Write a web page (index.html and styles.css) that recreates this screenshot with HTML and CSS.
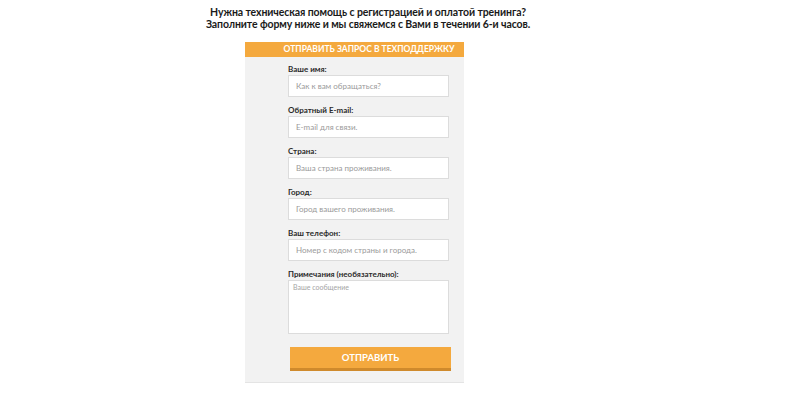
FILE: index.html
```html
<!DOCTYPE html>
<html>
<head>
	<title>Техподдержка</title>
	<meta name="viewport" content="width=device-width">
	<link rel="stylesheet" href="styles.css">
</head>
<body>
	<div class="page">
		<h1 class="intro">
			<span class="introLine">Нужна техническая помощь с регистрацией и оплатой тренинга?</span>
			<span class="introLine">Заполните форму ниже и мы свяжемся с Вами в течении 6-и часов.</span>
		</h1>

		<div class="supportBlock">
			<div class="supportHeader">Отправить запрос в техподдержку</div>
			<form class="supportForm">
				<label class="fieldLabel">Ваше имя:</label>
				<input class="fieldInput" type="text" placeholder="Как к вам обращаться?">

				<label class="fieldLabel">Обратный E-mail:</label>
				<input class="fieldInput" type="text" placeholder="E-mail для связи.">

				<label class="fieldLabel">Страна:</label>
				<input class="fieldInput" type="text" placeholder="Ваша страна проживания.">

				<label class="fieldLabel">Город:</label>
				<input class="fieldInput" type="text" placeholder="Город вашего проживания.">

				<label class="fieldLabel">Ваш телефон:</label>
				<input class="fieldInput" type="text" placeholder="Номер с кодом страны и города.">

				<label class="fieldLabel">Примечания (необязательно):</label>
				<textarea class="fieldText" placeholder="Ваше сообщение"></textarea>

				<button class="sendButton" type="button">Отправить</button>
			</form>
		</div>
	</div>
</body>
</html>
```

FILE: styles.css
```css
/* основные стили */
body {
	background-color: #fff;
	color: #222;
	font-family: Lato, "Noto Sans", Arial, sans-serif;
	margin: 0;
	padding: 0;
}

.page {
	width: 440px;
	margin: 0 0 0 148px;
	padding-top: 6px;
}

.intro {
	display: flex;
	flex-direction: column;
	align-items: center;
	font-size: 10.5px;
	line-height: 12px;
	font-weight: bold;
	letter-spacing: -0.1px;
	color: #1a1a1a;
	margin: 0 0 12px 0;
}

.introLine {
	white-space: nowrap;
}

/* блок формы */
.supportBlock {
	width: 219px;
	margin-left: 97px;
	background-color: #f2f2f2;
	border-bottom: 1px solid #e4e4e4;
}

.supportHeader {
	background-color: #f4a93e;
	color: #fff;
	font-size: 8.5px;
	font-weight: bold;
	text-transform: uppercase;
	height: 15px;
	line-height: 15px;
	text-align: center;
	padding-left: 29px;
	white-space: nowrap;
	overflow: hidden;
}

.supportForm {
	display: flex;
	flex-direction: column;
	align-items: flex-start;
	padding: 6px 15px 11px 43px;
}

.fieldLabel {
	font-size: 8px;
	font-weight: bold;
	line-height: 12px;
	color: #2b2b2b;
}

.fieldInput,
.fieldText {
	box-sizing: border-box;
	width: 161px;
	height: 22px;
	margin: 0 0 7px 0;
	padding: 0 7px;
	border: 1px solid #dcdcdc;
	background-color: #fff;
	font-family: Lato, "Noto Sans", Arial, sans-serif;
	font-size: 8px;
	color: #555;
	outline: none;
}

.fieldInput::placeholder {
	color: #9a9a9a;
}

.fieldText {
	height: 54px;
	margin-bottom: 13px;
	padding: 2px 4px;
	font-size: 7px;
	resize: none;
}

.fieldText::placeholder {
	color: #a5a5a5;
}

.sendButton {
	width: 161px;
	height: 24px;
	margin-left: 2px;
	background-color: #f4a93e;
	border: none;
	border-bottom: 3px solid #cf8a2c;
	color: #fff;
	font-family: Lato, "Noto Sans", Arial, sans-serif;
	font-size: 9.5px;
	font-weight: bold;
	text-transform: uppercase;
	cursor: pointer;
	padding: 0;
}

.sendButton:hover {
	background-color: #f0a02f;
}
```
